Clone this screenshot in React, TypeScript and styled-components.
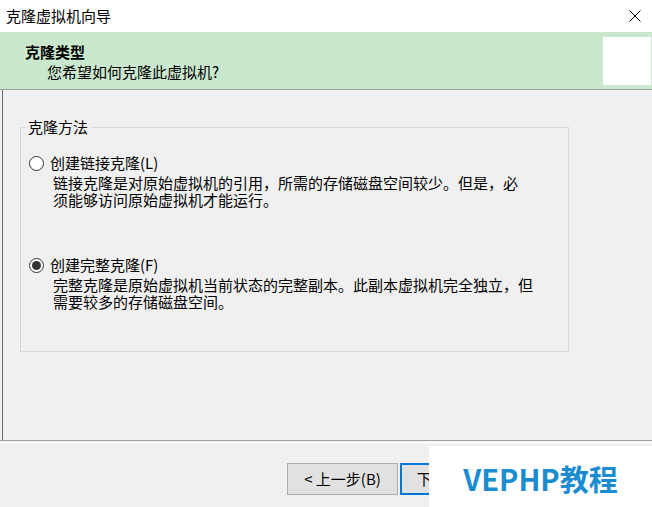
import React from "react";
import styled, { createGlobalStyle } from "styled-components";

const Global = createGlobalStyle`
  html, body { margin: 0; padding: 0; background: #f0f0f0; }
  body { font-family: "Noto Sans CJK SC", "Noto Sans", sans-serif; color: #000; }
  * { box-sizing: border-box; }
`;

const Window = styled.div`
  position: relative;
  width: 652px;
  height: 507px;
  overflow: hidden;
  background: #f0f0f0;
  display: flex;
  flex-direction: column;
  font-size: 15px;
`;

const TitleBar = styled.div`
  flex: none;
  height: 32px;
  background: #fff;
  display: flex;
  align-items: center;
  justify-content: space-between;
  padding: 0 11px 0 6px;
`;

const TitleText = styled.span`
  font-size: 15px;
  line-height: 18px;
`;

const CloseIcon = styled.svg`
  display: block;
  width: 12px;
  height: 12px;
`;

const Header = styled.div`
  flex: none;
  height: 58px;
  background: #cae8ce;
  border-bottom: 1px solid #a0a0a0;
  display: flex;
  justify-content: space-between;
  align-items: flex-start;
`;

const HeaderText = styled.div`
  padding: 10px 0 0 25px;
`;

const HeaderTitle = styled.div`
  font-weight: 700;
  line-height: 20px;
`;

const HeaderSub = styled.div`
  line-height: 20px;
  padding-left: 22px;
`;

const Logo = styled.div`
  width: 48px;
  height: 48px;
  margin: 5px 1px 0 0;
  background: #fff;
`;

const Content = styled.div`
  flex: none;
  height: 350px;
  margin-left: 2px;
  border-left: 1px solid #696969;
  padding: 28px 0 0 17px;
`;

const Group = styled.fieldset`
  margin: 0;
  padding: 0;
  width: 549px;
  height: 234px;
  border: 1px solid #d7d7d7;
`;

const Legend = styled.legend`
  margin-left: 4px;
  padding: 0 3px;
  line-height: 18px;
`;

const Options = styled.div`
  padding: 18px 0 0 8px;
`;

const Option = styled.div<{ $gap?: number }>`
  margin-top: ${(p) => p.$gap ?? 0}px;
`;

const OptionRow = styled.div`
  display: flex;
  align-items: center;
  gap: 6px;
  line-height: 18px;
`;

const Radio = styled.span<{ $checked?: boolean }>`
  flex: none;
  width: 15px;
  height: 15px;
  border-radius: 50%;
  border: 1px solid #333;
  background: #fff;
  display: flex;
  align-items: center;
  justify-content: center;
  &::after {
    content: "";
    display: ${(p) => (p.$checked ? "block" : "none")};
    width: 9px;
    height: 9px;
    border-radius: 50%;
    background: #333;
  }
`;

const Desc = styled.div`
  margin-top: 1.5px;
  padding-left: 24px;
  line-height: 17.5px;
  white-space: nowrap;
`;

const Footer = styled.div`
  flex: none;
  height: 67px;
  border-top: 1px solid #a0a0a0;
  box-shadow: inset 0 1px #f0f0f0, inset 0 2px #fff;
  display: flex;
  justify-content: flex-end;
  align-items: flex-start;
  padding: 22px 19px 0 0;
`;

const Button = styled.button<{ $primary?: boolean; $space?: number }>`
  width: 111px;
  height: 32px;
  margin-left: ${(p) => p.$space ?? 0}px;
  background: #e1e1e1;
  border: ${(p) => (p.$primary ? "2px solid #0078d7" : "1px solid #adadad")};
  font-family: "Noto Sans CJK SC", "Noto Sans", sans-serif;
  font-size: 15px;
  color: #000;
  padding: 0;
  line-height: 18px;
`;

const Watermark = styled.div`
  position: absolute;
  left: 429px;
  top: 446px;
  width: 223px;
  height: 61px;
  background: #fff;
  display: flex;
  align-items: center;
  justify-content: center;
  color: #1c8cd0;
  font-weight: 700;
  font-size: 29px;
  line-height: 34px;
  padding-top: 2px;
`;

export default function App() {
  return (
    <>
      <Global />
      <Window>
        <TitleBar>
          <TitleText>克隆虚拟机向导</TitleText>
          <CloseIcon viewBox="0 0 12 12">
            <path d="M0.5 0.5 L11.5 11.5 M11.5 0.5 L0.5 11.5" stroke="#000" strokeWidth="1" fill="none" />
          </CloseIcon>
        </TitleBar>
        <Header>
          <HeaderText>
            <HeaderTitle>克隆类型</HeaderTitle>
            <HeaderSub>您希望如何克隆此虚拟机?</HeaderSub>
          </HeaderText>
          <Logo />
        </Header>
        <Content>
          <Group>
            <Legend>克隆方法</Legend>
            <Options>
              <Option>
                <OptionRow>
                  <Radio />
                  <span>创建链接克隆(L)</span>
                </OptionRow>
                <Desc>
                  链接克隆是对原始虚拟机的引用，所需的存储磁盘空间较少。但是，必
                  <br />
                  须能够访问原始虚拟机才能运行。
                </Desc>
              </Option>
              <Option $gap={47.5}>
                <OptionRow>
                  <Radio $checked />
                  <span>创建完整克隆(F)</span>
                </OptionRow>
                <Desc>
                  完整克隆是原始虚拟机当前状态的完整副本。此副本虚拟机完全独立，但
                  <br />
                  需要较多的存储磁盘空间。
                </Desc>
              </Option>
            </Options>
          </Group>
        </Content>
        <Footer>
          <Button>&lt; 上一步(B)</Button>
          <Button $primary $space={2}>下一步(N) &gt;</Button>
          <Button $space={11}>取消</Button>
        </Footer>
        <Watermark>VEPHP教程</Watermark>
      </Window>
    </>
  );
}
